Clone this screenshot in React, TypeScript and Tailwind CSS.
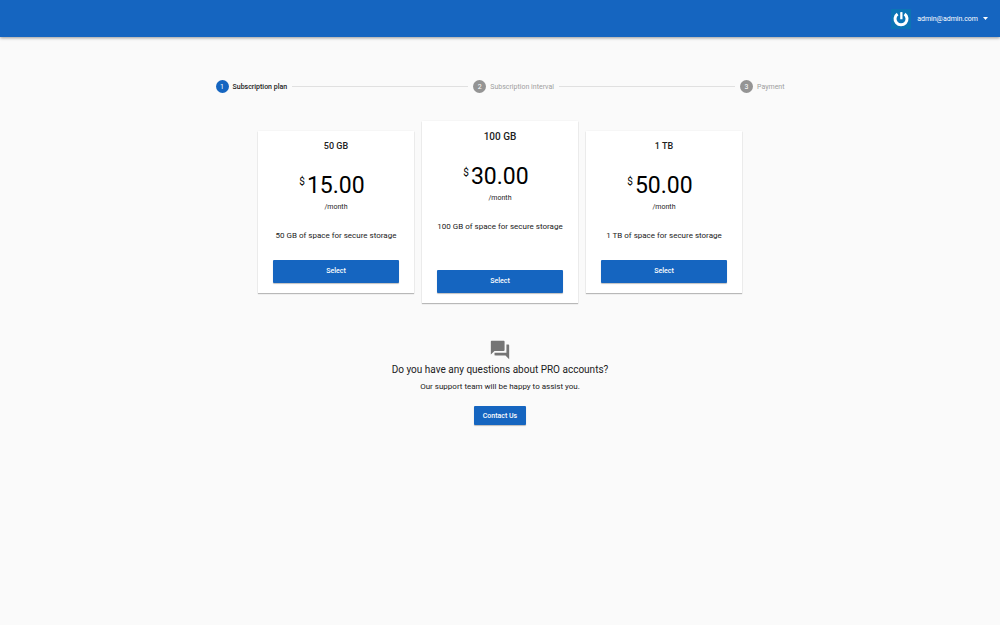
import React from "react";

type Plan = { name: string; price: string; featured?: boolean };

const plans: Plan[] = [
  { name: "50 GB", price: "15.00" },
  { name: "100 GB", price: "30.00", featured: true },
  { name: "1 TB", price: "50.00" },
];

const steps = ["Subscription plan", "Subscription interval", "Payment"];

function Header() {
  return (
    <header className="flex h-[37px] items-center justify-end bg-[#1565c0] px-3 shadow-[0_1px_3px_rgba(0,0,0,0.4)]">
      <button type="button" className="flex items-center text-[7px] leading-3 text-white">
        <svg viewBox="0 0 20 20" className="mr-1.5 size-5" aria-hidden="true">
          <rect width="20" height="20" fill="#0b74b5" />
          <path
            d="M6.6 4.9A6 6 0 1 0 13.6 5"
            fill="none"
            stroke="#fff"
            strokeWidth="3"
          />
          <path d="M9.2 3.2Q10.4 2.6 11.5 3.2V10.2H9.2z" fill="#fff" />
        </svg>
        admin@admin.com
        <svg viewBox="0 0 5 3" className="ml-[5px] h-[3px] w-[5px]" aria-hidden="true">
          <path d="M0 0h5L2.5 3z" fill="#fff" />
        </svg>
      </button>
    </header>
  );
}

function Stepper() {
  return (
    <ol className="mx-auto flex w-full max-w-[569px] items-center text-[7px] leading-3">
      {steps.map((label, i) => (
        <React.Fragment key={label}>
          {i > 0 && <li aria-hidden="true" className="mx-[5px] h-px flex-1 bg-[#e0e0e0]" />}
          <li
            aria-current={i === 0 ? "step" : undefined}
            className={
              i === 0
                ? "flex items-center gap-1 font-medium text-[#212121]"
                : "flex items-center gap-1 text-[#9e9e9e]"
            }
          >
            <span
              className={
                i === 0
                  ? "flex size-[13px] items-center justify-center rounded-full bg-[#1565c0] font-normal text-white"
                  : "flex size-[13px] items-center justify-center rounded-full bg-[#949494] text-white"
              }
            >
              {i + 1}
            </span>
            {label}
          </li>
        </React.Fragment>
      ))}
    </ol>
  );
}

function PlanCard({ name, price, featured }: Plan) {
  return (
    <article
      className={
        featured
          ? "flex min-h-[182px] min-w-0 flex-1 flex-col items-center bg-white px-[15px] pt-2 pb-[10px] text-center shadow-[0_1px_1px_rgba(0,0,0,0.25),0_0_2px_rgba(0,0,0,0.05)]"
          : "flex min-h-[162px] min-w-0 flex-1 flex-col items-center bg-white px-[15px] pt-2 pb-[10px] text-center shadow-[0_1px_1px_rgba(0,0,0,0.25),0_0_2px_rgba(0,0,0,0.05)]"
      }
    >
      <h2
        className={
          featured
            ? "text-[10px] leading-[15px] font-medium"
            : "text-[9px] leading-[14px] font-medium"
        }
      >
        {name}
      </h2>
      <p className="mt-[19px] flex items-start pr-2 text-[23px] leading-7 text-black">
        <span className="mr-0.5 text-[10px] leading-5">$</span>
        {price}
      </p>
      <p className="mt-px text-[7px] leading-3">/month</p>
      <p className="mt-[17px] text-[8px] leading-3 whitespace-nowrap">
        {name} of space for secure storage
      </p>
      <button
        type="button"
        className="mt-auto h-[23px] w-full rounded-[1px] bg-[#1565c0] text-[7px] font-medium text-white shadow-[0_1px_1px_rgba(0,0,0,0.25)]"
      >
        Select
      </button>
    </article>
  );
}

export default function App() {
  return (
    <div className="min-h-screen bg-[#fafafa] font-['Roboto',sans-serif] text-[#212121]">
      <Header />
      <main className="flex flex-col px-4 pt-[43px] pb-8">
        <Stepper />
        <section className="mx-auto mt-7 flex w-full max-w-[484px] items-center gap-2">
          {plans.map((plan) => (
            <PlanCard key={plan.name} {...plan} />
          ))}
        </section>
        <section className="mt-9 flex flex-col items-center text-center">
          <svg viewBox="0 0 24 24" className="size-[22px]" fill="#757575" aria-hidden="true">
            <path d="M21 6h-2v9H6v2c0 .55.45 1 1 1h11l4 4V7c0-.55-.45-1-1-1zm-4 6V3c0-.55-.45-1-1-1H3c-.55 0-1 .45-1 1v14l4-4h10c.55 0 1-.45 1-1z" />
          </svg>
          <h2 className="mt-0.5 text-[10px] leading-[14px]">Do you have any questions about PRO accounts?</h2>
          <p className="mt-1 text-[8px] leading-3">Our support team will be happy to assist you.</p>
          <a
            href="#contact"
            className="mt-[13px] rounded-[1px] bg-[#1565c0] px-[9px] pt-[5px] pb-1 text-[7px] leading-[10px] font-medium text-white shadow-[0_1px_1px_rgba(0,0,0,0.25)]"
          >
            Contact Us
          </a>
        </section>
      </main>
    </div>
  );
}
